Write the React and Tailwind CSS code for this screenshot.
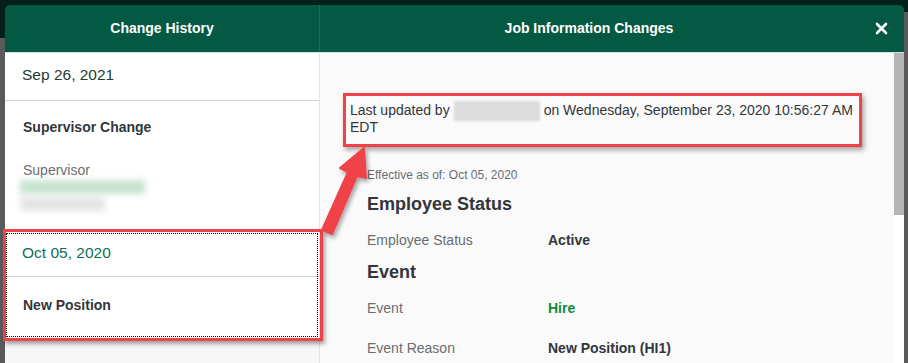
const sans = "font-['Liberation_Sans',Arial,sans-serif]";

const InfoRow = ({ label, value, green, className }) => (
  <div className={`flex text-[14px] leading-[17px] ${className}`}>
    <span className="w-[181px] text-[#6a6d70]">{label}</span>
    <span className={`font-bold ${green ? 'text-[#0f8a3c]' : 'text-[#32363a]'}`}>{value}</span>
  </div>
);

const App = () => {
  return (
    <div className={`relative w-[908px] h-[363px] overflow-hidden bg-[#5a5a5a] ${sans}`}>
      {/* backdrop strip behind the dialog */}
      <div className="absolute top-0 inset-x-0 h-[12px] bg-[#03201a]" />
      <div className="absolute top-0 left-0 w-[5px] h-[38px] bg-[#03201a]" />

      <div className="relative ml-[5px] mt-[5px] w-[899px] h-[358px] flex flex-col">
        {/* ── Header ── */}
        <div className="flex h-[48px] rounded-t-[5px] bg-[#045943] text-white text-[14px] font-bold border-b border-[#cfe2e6]">
          <div className="w-[315px] flex items-center justify-center border-r border-[#1d6c57]">
            Change History
          </div>
          <div className="flex-1 flex items-center">
            <div className="flex-1 text-center">Job Information Changes</div>
            <button className="w-[46px] h-full flex items-center justify-center">
              <svg width="13" height="13" viewBox="0 0 13 13">
                <path d="M2 2 L11 11 M11 2 L2 11" stroke="white" strokeWidth="2.6" strokeLinecap="round" />
              </svg>
            </button>
          </div>
        </div>

        {/* ── Body ── */}
        <div className="flex flex-1 min-h-0">
          {/* Left — history list */}
          <div className="w-[315px] bg-[#f7f7f7] border-r border-[#e4e4e4] flex flex-col">
            <div className="h-[48px] bg-white border-b border-[#d1d1d1] pl-[17px] pb-[3px] flex items-center text-[15.5px] text-[#253a35]">
              Sep 26, 2021
            </div>
            <div className="h-[128px] bg-white px-[18px] pt-[18px]">
              <div className="text-[14px] leading-[17px] font-bold text-[#32363a]">Supervisor Change</div>
              <div className="mt-[26px] text-[14px] leading-[17px] text-[#6a6d70]">Supervisor</div>
              <div className="mt-[1px] -ml-[3px] w-[125px] h-[14px] bg-[#c6e3d0] blur-[3px]" />
              <div className="mt-[3px] -ml-[3px] w-[85px] h-[14px] bg-[#e4e4e4] blur-[3px]" />
            </div>

            {/* selected item, boxed in red */}
            <div className="relative bg-white mt-[3px]">
              <div className="h-[45px] border-b border-[#d1d1d1] pl-[17px] pb-[2px] flex items-center text-[15.5px] text-[#0f6e55]">
                Oct 05, 2020
              </div>
              <div className="h-[61px] pl-[18px] pb-[5px] flex items-center text-[14px] font-bold text-[#32363a]">
                New Position
              </div>
              <div className="absolute inset-[1px] border border-dotted border-black pointer-events-none" />
              <div className="absolute -left-[2px] -right-[4px] -top-[3px] -bottom-[3px] border-[3px] border-[#ef4349] shadow-[2px_3px_4px_rgba(0,0,0,0.35)] pointer-events-none z-10" />
            </div>
          </div>

          {/* Right — change details */}
          <div className="flex-1 flex bg-[#fafafa]">
            <div className="flex-1 pl-[23px] pt-[40px] text-[#32363a]">
              <div className="w-[519px] border-[3px] border-[#ef4349] pl-[4px] pt-[6px] pb-[8px] text-[14px] leading-[17px] shadow-[2px_3px_5px_rgba(0,0,0,0.35)]">
                <div className="flex items-center h-[17px]">
                  <span>Last updated by</span>
                  <span className="inline-block shrink-0 w-[86px] h-[20px] mx-[4px] bg-[#dcdcdc] blur-[1px]" />
                  <span>on Wednesday, September 23, 2020 10:56:27 AM</span>
                </div>
                <div>EDT</div>
              </div>

              <div className="pl-[24px]">
                <div className="mt-[21px] text-[12px] leading-[15px] text-[#6a6d70]">Effective as of: Oct 05, 2020</div>
                <div className="mt-[10px] text-[18px] leading-[22px] font-bold">Employee Status</div>
                <InfoRow className="mt-[17px]" label="Employee Status" value="Active" />
                <div className="mt-[12px] text-[18px] leading-[22px] font-bold">Event</div>
                <InfoRow className="mt-[17px]" label="Event" value="Hire" green />
                <InfoRow className="mt-[23px]" label="Event Reason" value="New Position (HI1)" />
              </div>
            </div>

            {/* scrollbar */}
            <div className="w-[10px] bg-white">
              <div className="h-[162px] bg-[#b5b5b5]" />
            </div>
          </div>
        </div>
      </div>

      {/* annotation arrow */}
      <svg className="absolute inset-0 pointer-events-none z-20" width="908" height="363" viewBox="0 0 908 363">
        <defs>
          <filter id="arrowShadow" x="-20%" y="-20%" width="160%" height="160%">
            <feDropShadow dx="2" dy="3" stdDeviation="2" floodColor="#000" floodOpacity="0.35" />
          </filter>
        </defs>
        <polygon
          points="364,148 366,178 357,176 332,234 322,230 348,172 340,168"
          fill="#ef4349"
          stroke="#ef4349"
          strokeWidth="2"
          strokeLinejoin="round"
          filter="url(#arrowShadow)"
        />
      </svg>
    </div>
  );
};

export default App;
